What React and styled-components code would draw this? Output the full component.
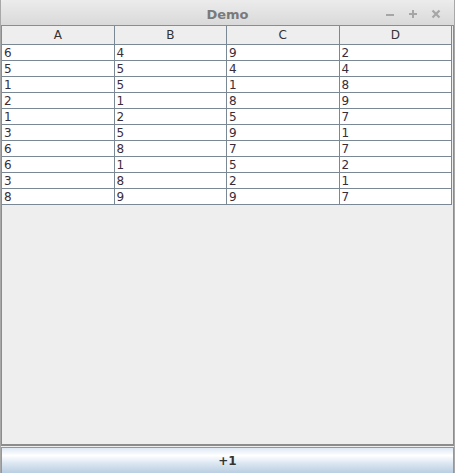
import React from 'react'
import styled, { createGlobalStyle } from 'styled-components'

const Global = createGlobalStyle`
  html, body { margin: 0; padding: 0; background: #eeeeee; }
  * { box-sizing: border-box; }
`

const Window = styled.div`
  width: 455px;
  height: 473px;
  display: flex;
  flex-direction: column;
  background: #eeeeee;
  border-left: 1px solid #a8a8a8;
  border-right: 1px solid #a8a8a8;
  font-family: "DejaVu Sans", sans-serif;
  overflow: hidden;
`

const TitleBar = styled.div`
  height: 25px;
  flex: none;
  position: relative;
  display: flex;
  align-items: center;
  justify-content: center;
  padding-top: 3px;
  background: linear-gradient(#ececec, #d9d9d9);
  border-top-left-radius: 4px;
  border-top-right-radius: 4px;
`

const Title = styled.span`
  font-size: 13px;
  font-weight: bold;
  color: #7a7a7a;
`

const Controls = styled.div`
  position: absolute;
  right: 13px;
  top: 9px;
  display: flex;
  gap: 13px;
`

const Icon = styled.svg`
  width: 10px;
  height: 10px;
  display: block;
`

const ScrollPane = styled.div`
  flex: 1;
  margin: 0 0 1px 0;
  border: 1px solid #8c8c8c;
  border-bottom: 2px solid #8c8c8c;
  background: #eeeeee;
`

const Grid = styled.div`
  display: grid;
  grid-template-columns: repeat(4, 1fr);
  width: 450px;
`

const Head = styled.div`
  height: 19px;
  display: flex;
  align-items: center;
  justify-content: center;
  font-size: 12px;
  color: #333;
  background: #eeeeee;
  border-right: 1px solid #7a8794;
  border-bottom: 1px solid #7a8794;
  &:last-child { border-right: none; }
`

const Cell = styled.div`
  height: 16px;
  padding-left: 2px;
  font-size: 12px;
  line-height: 16px;
  color: #3a2d3a;
  background: #ffffff;
  border-right: 1px solid #7a8794;
  border-bottom: 1px solid #7a8794;
`

const Button = styled.div`
  height: 26px;
  flex: none;
  display: flex;
  align-items: center;
  justify-content: center;
  border: 1px solid #8a9aab;
  border-bottom: none;
  background: linear-gradient(#dde8f3 0%, #ffffff 30%, #d8e4f0 65%, #b9cee3 100%);
  font-size: 12px;
  font-weight: bold;
  color: #333;
`

const rows = [
  [6, 4, 9, 2],
  [5, 5, 4, 4],
  [1, 5, 1, 8],
  [2, 1, 8, 9],
  [1, 2, 5, 7],
  [3, 5, 9, 1],
  [6, 8, 7, 7],
  [6, 1, 5, 2],
  [3, 8, 2, 1],
  [8, 9, 9, 7],
]

export default function App() {
  return (
    <>
      <Global />
      <Window>
        <TitleBar>
          <Title>Demo</Title>
          <Controls>
            <Icon viewBox="0 0 10 10"><rect x="1" y="5" width="8" height="2" fill="#a6a6a6" /></Icon>
            <Icon viewBox="0 0 10 10"><path d="M1 5h8M5 1v8" stroke="#a6a6a6" strokeWidth="2" /></Icon>
            <Icon viewBox="0 0 10 10"><path d="M1.5 1.5l7 7M8.5 1.5l-7 7" stroke="#a6a6a6" strokeWidth="2.2" /></Icon>
          </Controls>
        </TitleBar>
        <ScrollPane>
          <Grid>
            {['A', 'B', 'C', 'D'].map(h => <Head key={h}>{h}</Head>)}
            {rows.flatMap((r, i) => r.map((v, j) => <Cell key={i + '-' + j}>{v}</Cell>))}
          </Grid>
        </ScrollPane>
        <Button>+1</Button>
      </Window>
    </>
  )
}
